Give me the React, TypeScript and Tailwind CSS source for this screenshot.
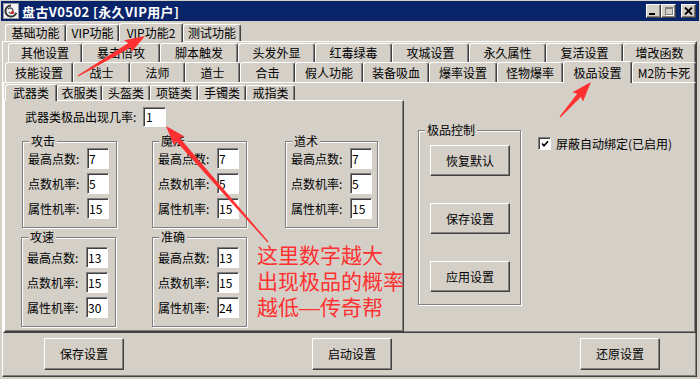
import type { ReactNode } from 'react'

const raised =
  'border border-t-white border-l-white border-r-[#404040] border-b-[#404040] shadow-[inset_-1px_-1px_0_#808080]'
const sunken =
  'bg-white border border-t-[#808080] border-l-[#808080] border-r-white border-b-white shadow-[inset_1px_1px_0_#404040]'

type TabDef = { label: string; w: string; selected?: boolean }

const topTabs: TabDef[] = [
  { label: '基础功能', w: 'w-[61px]' },
  { label: 'VIP功能', w: 'w-[53px]' },
  { label: 'VIP功能2', w: 'w-[64px]', selected: true },
  { label: '测试功能', w: 'w-[58px]' },
]

const rowOne: TabDef[] = [
  { label: '其他设置', w: 'w-[74px]' },
  { label: '暴击倍攻', w: 'w-[78px]' },
  { label: '脚本触发', w: 'w-[78px]' },
  { label: '头发外显', w: 'w-[77px]' },
  { label: '红毒绿毒', w: 'w-[77px]' },
  { label: '攻城设置', w: 'w-[77px]' },
  { label: '永久属性', w: 'w-[77px]' },
  { label: '复活设置', w: 'w-[77px]' },
  { label: '增改函数', w: 'w-[73px]' },
]

const rowTwo: TabDef[] = [
  { label: '技能设置', w: 'w-[68px]' },
  { label: '战士', w: 'w-[57px]' },
  { label: '法师', w: 'w-[55px]' },
  { label: '道士', w: 'w-[55px]' },
  { label: '合击', w: 'w-[55px]' },
  { label: '假人功能', w: 'w-[68px]' },
  { label: '装备吸血', w: 'w-[66px]' },
  { label: '爆率设置', w: 'w-[68px]' },
  { label: '怪物爆率', w: 'w-[66px]' },
  { label: '极品设置', w: 'w-[69px]', selected: true },
  { label: 'M2防卡死', w: 'w-[64px]' },
]

const itemTabs: TabDef[] = [
  { label: '武器类', w: 'w-[52px]', selected: true },
  { label: '衣服类', w: 'w-[45px]' },
  { label: '头盔类', w: 'w-[48px]' },
  { label: '项链类', w: 'w-[48px]' },
  { label: '手镯类', w: 'w-[48px]' },
  { label: '戒指类', w: 'w-[49px]' },
]

function TabRow({ tabs, h, hSel, className }: { tabs: TabDef[]; h: string; hSel: string; className: string }) {
  return (
    <div className={`flex items-end ${className}`}>
      {tabs.map((t) => (
        <div
          key={t.label}
          className={`${t.w} ${
            t.selected ? `${hSel} relative z-10 -mb-px bg-[#d4d0c8]` : h
          } flex shrink-0 items-center justify-center rounded-t-[3px] border-t border-l border-r border-t-white border-l-white border-r-[#404040] shadow-[inset_-1px_0_0_#808080] leading-none whitespace-nowrap`}
        >
          {t.label}
        </div>
      ))}
    </div>
  )
}

function Group({ title, className, children }: { title: string; className: string; children: ReactNode }) {
  return (
    <div className={`relative shrink-0 border border-[#808080] shadow-[inset_1px_1px_0_#fff,1px_1px_0_#fff] ${className}`}>
      <span className="absolute left-[6px] top-[-8px] bg-[#d4d0c8] px-[2px] leading-[14px]">{title}</span>
      {children}
    </div>
  )
}

function Field({ label, value }: { label: string; value: string }) {
  return (
    <div className="flex h-[21px] items-center">
      <span className="w-[59px] whitespace-nowrap">{label}</span>
      <div className={`${sunken} flex h-[21px] w-[22px] items-center pl-[1px] text-[12px]`}>{value}</div>
    </div>
  )
}

function StatGroup({ title, values, className, pad }: { title: string; values: string[]; className: string; pad: string }) {
  return (
    <Group title={title} className={className}>
      <div className={`flex flex-col gap-[4px] pl-[5px] ${pad}`}>
        <Field label="最高点数:" value={values[0]} />
        <Field label="点数机率:" value={values[1]} />
        <Field label="属性机率:" value={values[2]} />
      </div>
    </Group>
  )
}

function Button({ label, className }: { label: string; className: string }) {
  return <div className={`${raised} flex shrink-0 items-center justify-center ${className}`}>{label}</div>
}

function arrow(tx: number, ty: number, px: number, py: number) {
  const dx = px - tx
  const dy = py - ty
  const len = Math.hypot(dx, dy)
  const ux = dx / len
  const uy = dy / len
  const nx = -uy
  const ny = ux
  const head = 18
  const hw = 7
  const sw = 2.5
  const tw = 0.6
  const bx = px - ux * head
  const by = py - uy * head
  const pts = [
    [tx + nx * tw, ty + ny * tw],
    [bx + nx * sw, by + ny * sw],
    [bx + nx * hw - ux * 2, by + ny * hw - uy * 2],
    [px, py],
    [bx - nx * hw - ux * 2, by - ny * hw - uy * 2],
    [bx - nx * sw, by - ny * sw],
    [tx - nx * tw, ty - ny * tw],
  ]
  return pts.map((p) => `${p[0].toFixed(1)},${p[1].toFixed(1)}`).join(' ')
}

function Logo() {
  return (
    <svg width="16" height="16" viewBox="0 0 16 16" className="shrink-0">
      <rect x="0" y="0" width="16" height="16" fill="#f4f4f4" />
      <rect x="0.5" y="0.5" width="15" height="15" fill="none" stroke="#9a9a9a" />
      <path d="M8 2.5a5.5 5.5 0 1 0 5.2 7.3" fill="none" stroke="#333" strokeWidth="2" />
      <path d="M5 6c2-2 5-1 5 2s-3 3-4 1" fill="none" stroke="#555" strokeWidth="1.4" />
      <circle cx="9.5" cy="9.5" r="1.6" fill="#d22" />
    </svg>
  )
}

function TitleButton({ children, className = '' }: { children: ReactNode; className?: string }) {
  return (
    <div className={`${raised} flex h-[14px] w-[15px] items-center justify-center bg-[#d4d0c8] ${className}`}>{children}</div>
  )
}

export default function App() {
  return (
    <div className="relative h-[379px] w-[700px] overflow-hidden bg-[#d4d0c8] font-['Noto_Sans_CJK_SC',sans-serif] text-[12px] text-black">
      {/* title bar */}
      <div className="mx-[1px] mt-[1px] flex h-[20px] items-center bg-[#0a246a] pl-[2px] pr-[3px]">
        <Logo />
        <span className="ml-[3px] text-[13px] font-bold leading-none tracking-[0.4px] whitespace-nowrap text-white">盘古V0502 [永久VIP用户]</span>
        <div className="ml-auto flex items-center">
          <TitleButton>
            <div className="mt-[6px] mr-[3px] h-[2px] w-[6px] bg-black" />
          </TitleButton>
          <TitleButton>
            <div className="h-[8px] w-[8px] border border-t-2 border-[#808080] shadow-[1px_1px_0_#fff]" />
          </TitleButton>
          <TitleButton className="ml-[5px]">
            <svg width="9" height="8" viewBox="0 0 9 8">
              <path d="M1 0.5 L8 7.5 M8 0.5 L1 7.5" stroke="#000" strokeWidth="1.8" />
            </svg>
          </TitleButton>
        </div>
      </div>

      {/* top level tabs */}
      <TabRow tabs={topTabs} h="h-[17px]" hSel="h-[19px]" className="h-[20px] pl-[5px]" />

      {/* VIP功能2 page */}
      <div className={`${raised} ml-[2px] h-[336px] w-[695px]`}>
        <TabRow tabs={rowOne} h="h-[19px]" hSel="h-[21px]" className="mt-[1px] h-[19px] pl-[5px]" />
        <TabRow tabs={rowTwo} h="h-[20px]" hSel="h-[22px]" className="h-[20px] pl-[2px]" />

        {/* 极品设置 page */}
        <div className={`${raised} flex h-[251px] w-[693px]`}>
          <div className="w-[400px] shrink-0">
            <TabRow tabs={itemTabs} h="h-[15px]" hSel="h-[17px]" className="h-[17px] pl-[1px]" />
            <div className={`${raised} h-[232px] w-[400px]`}>
              <div className="ml-[20px] mt-[6px] flex h-[20px] items-center">
                <span className="w-[118px] whitespace-nowrap">武器类极品出现几率:</span>
                <div className={`${sunken} flex h-[20px] w-[23px] items-center pl-[2px]`}>1</div>
              </div>

              <div className="ml-[17px] mt-[14px] flex">
                <StatGroup title="攻击" values={['7', '5', '15']} className="h-[87px] w-[95px]" pad="pt-[6px]" />
                <StatGroup title="魔法" values={['7', '5', '15']} className="ml-[35px] h-[87px] w-[95px]" pad="pt-[6px]" />
                <StatGroup title="道术" values={['7', '5', '15']} className="ml-[38px] h-[87px] w-[93px]" pad="pt-[6px]" />
              </div>

              <div className="ml-[16px] mt-[9px] flex">
                <StatGroup title="攻速" values={['13', '15', '30']} className="h-[90px] w-[95px]" pad="pt-[9px]" />
                <StatGroup title="准确" values={['13', '15', '24']} className="ml-[36px] h-[90px] w-[95px]" pad="pt-[9px]" />
                <div className="ml-[10px] mt-[6px] font-['Liberation_Sans','Noto_Sans_CJK_SC',sans-serif] text-[21px] leading-[26px] whitespace-nowrap text-[#ff3030]">
                  <div>这里数字越大</div>
                  <div>出现极品的概率</div>
                  <div>越低—传奇帮</div>
                </div>
              </div>
            </div>
          </div>

          <div className="flex flex-1 items-start pl-[14px]">
            <Group title="极品控制" className="mt-[47px] h-[175px] w-[103px]">
              <div className="flex flex-col gap-[27px] pl-[11px] pt-[14px]">
                <Button label="恢复默认" className="h-[31px] w-[80px]" />
                <Button label="保存设置" className="h-[31px] w-[80px]" />
                <Button label="应用设置" className="h-[31px] w-[80px]" />
              </div>
            </Group>
            <div className="ml-[17px] mt-[54px] flex items-center">
              <div className={`${sunken} flex h-[13px] w-[13px] items-center justify-center`}>
                <svg width="8" height="8" viewBox="0 0 8 8">
                  <path d="M1 3.5 L3 5.8 L7 1.2" fill="none" stroke="#000" strokeWidth="1.6" />
                </svg>
              </div>
              <span className="ml-[5px] leading-none whitespace-nowrap">屏蔽自动绑定(已启用)</span>
            </div>
          </div>
        </div>

        {/* bottom buttons */}
        <div className="flex gap-[188px] pl-[41px] pt-[5px]">
          <Button label="保存设置" className="h-[32px] w-[80px]" />
          <Button label="启动设置" className="h-[32px] w-[80px]" />
          <Button label="还原设置" className="h-[32px] w-[80px]" />
        </div>
      </div>

      {/* red annotation arrows */}
      <svg className="pointer-events-none absolute inset-0 z-20" width="700" height="379">
        <polygon points={arrow(78, 76, 145, 36)} fill="#ff3030" />
        <polygon points={arrow(560, 117, 591, 82)} fill="#ff3030" />
        <polygon points={arrow(268, 242, 166, 126)} fill="#ff3030" />
      </svg>
    </div>
  )
}
